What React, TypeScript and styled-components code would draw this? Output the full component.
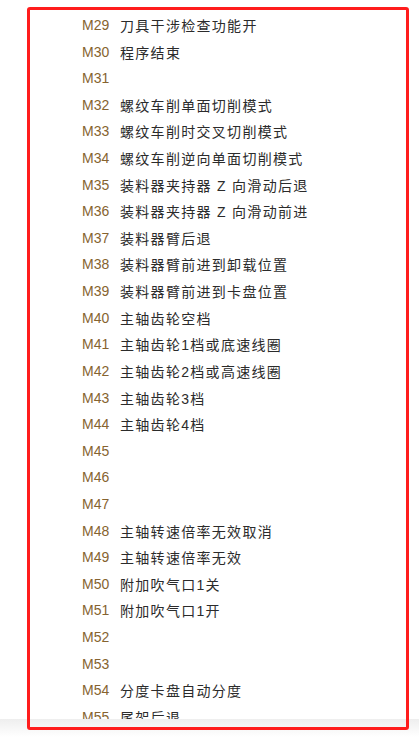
import styled, { createGlobalStyle } from "styled-components";

const codes: [string, string][] = [
  ["M29", "刀具干涉检查功能开"],
  ["M30", "程序结束"],
  ["M31", ""],
  ["M32", "螺纹车削单面切削模式"],
  ["M33", "螺纹车削时交叉切削模式"],
  ["M34", "螺纹车削逆向单面切削模式"],
  ["M35", "装料器夹持器 Z 向滑动后退"],
  ["M36", "装料器夹持器 Z 向滑动前进"],
  ["M37", "装料器臂后退"],
  ["M38", "装料器臂前进到卸载位置"],
  ["M39", "装料器臂前进到卡盘位置"],
  ["M40", "主轴齿轮空档"],
  ["M41", "主轴齿轮1档或底速线圈"],
  ["M42", "主轴齿轮2档或高速线圈"],
  ["M43", "主轴齿轮3档"],
  ["M44", "主轴齿轮4档"],
  ["M45", ""],
  ["M46", ""],
  ["M47", ""],
  ["M48", "主轴转速倍率无效取消"],
  ["M49", "主轴转速倍率无效"],
  ["M50", "附加吹气口1关"],
  ["M51", "附加吹气口1开"],
  ["M52", ""],
  ["M53", ""],
  ["M54", "分度卡盘自动分度"],
  ["M55", "尾架后退"],
];

export default function App() {
  return (
    <>
      <GlobalStyle />
      <SPage>
        <SViewport>
          <SList>
            {codes.map(([code, desc]) => (
              <SRow key={code}>
                <SCode>{code}</SCode>
                <SDesc>{desc}</SDesc>
              </SRow>
            ))}
          </SList>
        </SViewport>
        <SBottomBar />
        <SFrame />
      </SPage>
    </>
  );
}

const GlobalStyle = createGlobalStyle`
  body {
    margin: 0;
    background: #fff;
    font-family: "Liberation Sans", "Noto Sans CJK SC", sans-serif;
  }
`;

const SPage = styled.div`
  position: relative;
  width: 419px;
  height: 737px;
  overflow: hidden;
`;

const SViewport = styled.div`
  height: 719px;
  overflow: hidden;
  box-sizing: border-box;
  padding-top: 11.7px;
`;

const SList = styled.ul`
  list-style: none;
  margin: 0;
  padding: 0 0 0 82px;
`;

const SRow = styled.li`
  display: flex;
  align-items: center;
  height: 26.62px;
  font-size: 14px;
`;

const SCode = styled.span`
  width: 38px;
  flex-shrink: 0;
  color: #86632f;
`;

const SDesc = styled.span`
  color: #2b2b2b;
  letter-spacing: 1.3px;
`;

const SBottomBar = styled.div`
  height: 18px;
  background: linear-gradient(#eeeeee, #ffffff);
`;

const SFrame = styled.div`
  position: absolute;
  left: 27px;
  top: 7px;
  width: 382px;
  height: 723px;
  box-sizing: border-box;
  border: 3px solid #ff1c1c;
  border-radius: 3px;
  pointer-events: none;
`;
